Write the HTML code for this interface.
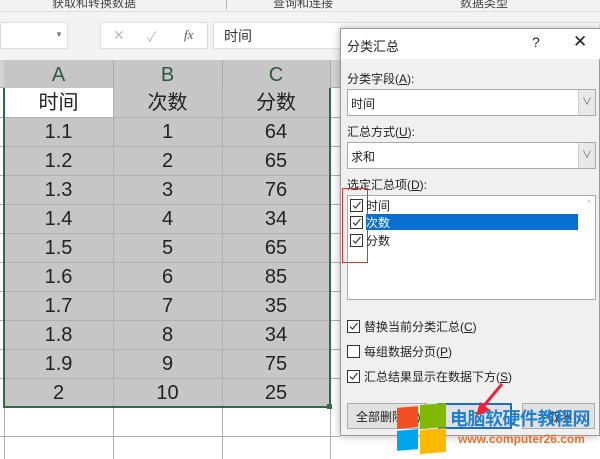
<!DOCTYPE html><html><head><meta charset="utf-8"><style>
*{margin:0;padding:0;box-sizing:border-box}
body{width:600px;height:459px;overflow:hidden;background:#fff;font-family:"Liberation Sans","Noto Sans CJK SC",sans-serif;position:relative}
.a{position:absolute;white-space:nowrap}
.cell{position:absolute;text-align:center;font-size:20px;color:#222;line-height:31px}
.dl{font-size:12px;color:#222}
.cb{position:absolute;width:13px;height:13px;border:1px solid #333;background:#fff}
.cb svg{position:absolute;left:0;top:0}
</style></head><body>
<div class="a" style="left:0;top:0;width:600px;height:12px;background:#f3f3f3;border-bottom:1px solid #ddd"></div>
<div class="a" style="left:52px;top:-6px;font-size:12px;color:#444">获取和转换数据</div>
<div class="a" style="left:226px;top:0;width:1px;height:10px;background:#bbb"></div>
<div class="a" style="left:273px;top:-6px;font-size:12px;color:#444">查询和连接</div>
<div class="a" style="left:460px;top:-6px;font-size:12px;color:#444">数据类型</div>
<div class="a" style="left:0;top:12px;width:600px;height:48px;background:#f3f3f3"></div>
<div class="a" style="left:0;top:22px;width:68px;height:27px;background:#fff;border:1px solid #ddd"></div>
<div class="a" style="left:55px;top:30px;font-size:8px;color:#777">▼</div>
<div class="a" style="left:100px;top:22px;width:108px;height:27px;background:#fff;border:1px solid #ddd"></div>
<div class="a" style="left:113px;top:27px;font-size:14px;color:#bbb">✕</div>
<div class="a" style="left:147px;top:27px;font-size:14px;color:#bbb">✓</div>
<div class="a" style="left:184px;top:27px;font-size:13px;color:#555;font-style:italic;font-family:'Liberation Serif',serif">fx</div>
<div class="a" style="left:213px;top:22px;width:387px;height:27px;background:#fff;border:1px solid #ddd"></div>
<div class="a" style="left:224px;top:26px;font-size:14px;color:#333">时间</div>
<div class="a" style="left:0;top:60px;width:340px;height:28px;background:#d4d4d4;border-bottom:1px solid #aaa"></div>
<div class="a" style="left:4px;top:60px;width:326px;height:28px;background:#c6c6c6"></div>
<div class="cell" style="left:4px;top:60px;width:109px;color:#2e5a3e">A</div>
<div class="cell" style="left:113px;top:60px;width:109px;color:#2e5a3e">B</div>
<div class="cell" style="left:222px;top:60px;width:108px;color:#2e5a3e">C</div>
<div class="a" style="left:113px;top:60px;width:1px;height:28px;background:#aaa"></div>
<div class="a" style="left:222px;top:60px;width:1px;height:28px;background:#aaa"></div>
<div class="a" style="left:330px;top:60px;width:1px;height:28px;background:#aaa"></div>
<div class="a" style="left:4px;top:88px;width:326px;height:319px;background:#c6c6c6"></div>
<div class="a" style="left:4px;top:88px;width:109px;height:29px;background:#fff"></div>
<svg class="a" style="left:0;top:88px" width="340" height="371">
<g stroke="#b0b0b0" stroke-width="1">
<line x1="113.5" y1="0" x2="113.5" y2="371"/><line x1="222.5" y1="0" x2="222.5" y2="371"/><line x1="330.5" y1="0" x2="330.5" y2="371"/><line x1="4.5" y1="0" x2="4.5" y2="371"/>
<line x1="0" y1="29.5" x2="340" y2="29.5"/><line x1="0" y1="58.5" x2="340" y2="58.5"/><line x1="0" y1="87.5" x2="340" y2="87.5"/><line x1="0" y1="116.5" x2="340" y2="116.5"/><line x1="0" y1="145.5" x2="340" y2="145.5"/><line x1="0" y1="174.5" x2="340" y2="174.5"/><line x1="0" y1="203.5" x2="340" y2="203.5"/><line x1="0" y1="232.5" x2="340" y2="232.5"/><line x1="0" y1="261.5" x2="340" y2="261.5"/><line x1="0" y1="290.5" x2="340" y2="290.5"/><line x1="0" y1="348.5" x2="340" y2="348.5"/>
</g>
<rect x="4" y="-1" width="326" height="320" fill="none" stroke="#2f6b46" stroke-width="2"/>
<rect x="327" y="316" width="5" height="5" fill="#2f6b46"/>
</svg>
<div class="cell" style="left:4px;top:88px;width:109px">时间</div><div class="cell" style="left:113px;top:88px;width:109px">次数</div><div class="cell" style="left:222px;top:88px;width:108px">分数</div>
<div class="cell" style="left:4px;top:117px;width:109px">1.1</div><div class="cell" style="left:113px;top:117px;width:109px">1</div><div class="cell" style="left:222px;top:117px;width:108px">64</div>
<div class="cell" style="left:4px;top:146px;width:109px">1.2</div><div class="cell" style="left:113px;top:146px;width:109px">2</div><div class="cell" style="left:222px;top:146px;width:108px">65</div>
<div class="cell" style="left:4px;top:175px;width:109px">1.3</div><div class="cell" style="left:113px;top:175px;width:109px">3</div><div class="cell" style="left:222px;top:175px;width:108px">76</div>
<div class="cell" style="left:4px;top:204px;width:109px">1.4</div><div class="cell" style="left:113px;top:204px;width:109px">4</div><div class="cell" style="left:222px;top:204px;width:108px">34</div>
<div class="cell" style="left:4px;top:233px;width:109px">1.5</div><div class="cell" style="left:113px;top:233px;width:109px">5</div><div class="cell" style="left:222px;top:233px;width:108px">65</div>
<div class="cell" style="left:4px;top:262px;width:109px">1.6</div><div class="cell" style="left:113px;top:262px;width:109px">6</div><div class="cell" style="left:222px;top:262px;width:108px">85</div>
<div class="cell" style="left:4px;top:291px;width:109px">1.7</div><div class="cell" style="left:113px;top:291px;width:109px">7</div><div class="cell" style="left:222px;top:291px;width:108px">35</div>
<div class="cell" style="left:4px;top:320px;width:109px">1.8</div><div class="cell" style="left:113px;top:320px;width:109px">8</div><div class="cell" style="left:222px;top:320px;width:108px">34</div>
<div class="cell" style="left:4px;top:349px;width:109px">1.9</div><div class="cell" style="left:113px;top:349px;width:109px">9</div><div class="cell" style="left:222px;top:349px;width:108px">75</div>
<div class="cell" style="left:4px;top:378px;width:109px">2</div><div class="cell" style="left:113px;top:378px;width:109px">10</div><div class="cell" style="left:222px;top:378px;width:108px">25</div>

<div class="a" style="left:340px;top:28px;width:260px;height:408px;background:#f0f0f0;border:1px solid #999;box-shadow:0 0 8px rgba(0,0,0,.3)"></div>
<div class="a" style="left:341px;top:29px;width:259px;height:30px;background:#fff"></div>
<div class="a dl" style="left:347px;top:36px;font-size:13px">分类汇总</div>
<div class="a dl" style="left:532px;top:34px;font-size:14px">?</div>
<div class="a dl" style="left:573px;top:32px;font-size:17px">✕</div>
<div class="a dl" style="left:347px;top:70px">分类字段(<u>A</u>):</div>
<div class="a" style="left:347px;top:89px;width:249px;height:27px;background:#fff;border:1px solid #aaa"></div>
<div class="a" style="left:578px;top:90px;width:17px;height:25px;background:#e8e8e8;border-left:1px solid #ccc;font-size:10px;color:#666;text-align:center;line-height:25px">∨</div>
<div class="a dl" style="left:351px;top:95px">时间</div>
<div class="a dl" style="left:347px;top:123px">汇总方式(<u>U</u>):</div>
<div class="a" style="left:347px;top:142px;width:249px;height:27px;background:#fff;border:1px solid #aaa"></div>
<div class="a" style="left:578px;top:143px;width:17px;height:25px;background:#e8e8e8;border-left:1px solid #ccc;font-size:10px;color:#666;text-align:center;line-height:25px">∨</div>
<div class="a dl" style="left:351px;top:148px">求和</div>
<div class="a dl" style="left:347px;top:176px">选定汇总项(<u>D</u>):</div>
<div class="a" style="left:347px;top:195px;width:249px;height:105px;background:#fff;border:1px solid #aaa"></div>
<div class="a" style="left:366px;top:214px;width:212px;height:16px;background:#0b6fd1"></div>
<div class="a" style="left:587px;top:198px;font-size:9px;color:#bbb">^</div>
<div class="a" style="left:342px;top:188px;width:26px;height:75px;border:1px solid #d33"></div>
<div class="cb" style="left:350px;top:199px"><svg width="11" height="11"><path d="M2 5.5L4.5 8L9.5 2" fill="none" stroke="#333" stroke-width="1.2"/></svg></div>
<div class="a dl" style="left:366px;top:197px">时间</div>
<div class="cb" style="left:350px;top:216px"><svg width="11" height="11"><path d="M2 5.5L4.5 8L9.5 2" fill="none" stroke="#333" stroke-width="1.2"/></svg></div>
<div class="a dl" style="left:366px;top:214px;color:#fff">次数</div>
<div class="cb" style="left:350px;top:234px"><svg width="11" height="11"><path d="M2 5.5L4.5 8L9.5 2" fill="none" stroke="#333" stroke-width="1.2"/></svg></div>
<div class="a dl" style="left:366px;top:232px">分数</div>
<div class="cb" style="left:347px;top:320px"><svg width="11" height="11"><path d="M2 5.5L4.5 8L9.5 2" fill="none" stroke="#333" stroke-width="1.2"/></svg></div>
<div class="a dl" style="left:364px;top:318px">替换当前分类汇总(<u>C</u>)</div>
<div class="cb" style="left:347px;top:345px"></div>
<div class="a dl" style="left:364px;top:343px">每组数据分页(<u>P</u>)</div>
<div class="cb" style="left:347px;top:370px"><svg width="11" height="11"><path d="M2 5.5L4.5 8L9.5 2" fill="none" stroke="#333" stroke-width="1.2"/></svg></div>
<div class="a dl" style="left:364px;top:368px">汇总结果显示在数据下方(<u>S</u>)</div>
<div class="a" style="left:347px;top:403px;width:80px;height:26px;background:#e1e1e1;border:1px solid #adadad"></div>
<div class="a dl" style="left:356px;top:408px">全部删除(R)</div>
<div class="a" style="left:438px;top:403px;width:74px;height:26px;background:#e1e1e1;border:2px solid #1a6fc9"></div>
<div class="a" style="left:522px;top:403px;width:73px;height:26px;background:#e1e1e1;border:1px solid #adadad"></div>
<div class="a dl" style="left:548px;top:408px">取消</div>
<div class="a" style="left:397px;top:407px;width:21px;height:21px;background:#f25022;transform:skewY(-5deg)"></div>
<div class="a" style="left:420px;top:404px;width:26px;height:24px;background:#7fba00;transform:skewY(-5deg)"></div>
<div class="a" style="left:397px;top:430px;width:21px;height:20px;background:#00a4ef;transform:skewY(-5deg)"></div>
<div class="a" style="left:420px;top:429px;width:26px;height:24px;background:#ffb900;transform:skewY(-5deg)"></div>
<div class="a" style="left:450px;top:405px;font-size:18px;font-weight:bold;color:#1e7fd0;letter-spacing:-0.5px">电脑软硬件教程网</div>
<div class="a" style="left:458px;top:432px;font-size:12px;font-weight:bold;color:#e8702a">www.computer26.com</div>
<svg class="a" style="left:470px;top:380px" width="40" height="40"><path d="M32 4L12 28" stroke="#e23" stroke-width="3"/><path d="M6 36L10 22L20 30Z" fill="#e23"/></svg>
</body></html>
